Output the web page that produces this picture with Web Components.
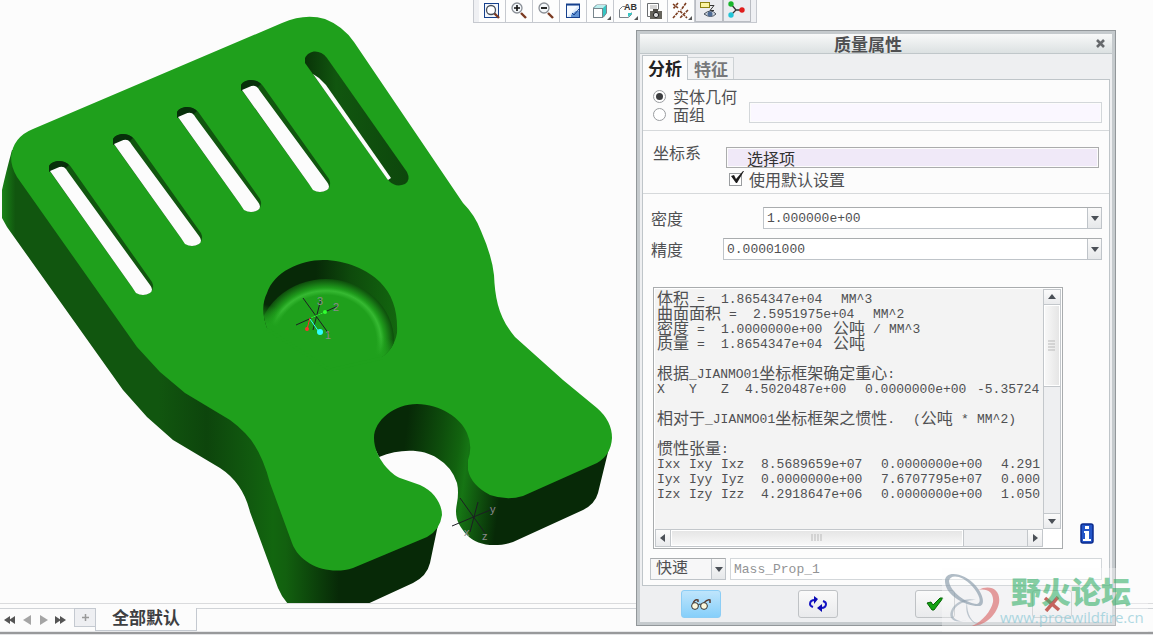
<!DOCTYPE html>
<html lang="zh-CN">
<head>
<meta charset="utf-8">
<title>质量属性</title>
<style>
  html, body { height: 100%; margin: 0; }
  body {
    background: #fcfcfc;
    color: #4f5052;
    font: 16px/18px "Liberation Mono", "Noto Sans CJK SC", monospace;
    overflow: hidden;
  }
</style>
</head>
<body>
<cad-app>
  <model-view></model-view>
  <view-toolbar slot="toolbar"></view-toolbar>
  <tool-dialog slot="dialog" heading="质量属性">
    <mass-form></mass-form>
    <dialog-actions slot="actions"></dialog-actions>
  </tool-dialog>
  <layer-tabs slot="footer" label="全部默认"></layer-tabs>
  <site-mark slot="mark"></site-mark>
</cad-app>

<script>
// small base class: every element renders its template once
class View extends HTMLElement {
  constructor() {
    super();
    this.attachShadow({mode: 'open'});
  }
  connectedCallback() {
    this.shadowRoot.innerHTML = this.render();
  }
}

customElements.define('cad-app', class extends View {
  render() {
    return `
      <style>
        :host { display: flex; flex-direction: column; height: 100%; position: relative; overflow: hidden; }
        main { flex: 1; min-height: 0; overflow: hidden; display: flex; }
        ::slotted([slot=toolbar]) { position: absolute; top: 0; left: 41%; }
        ::slotted([slot=dialog]) { position: absolute; top: 30px; right: 37px; width: min(480px, 100%); box-sizing: border-box; }
        ::slotted([slot=mark]) { position: absolute; right: 5px; bottom: 3px; }
      </style>
      <main><slot></slot></main>
      <slot name="footer"></slot>
      <slot name="toolbar"></slot>
      <slot name="dialog"></slot>
      <slot name="mark"></slot>
    `;
  }
});

// [ax, ay] is the top left end of a slot, [bx, by] its lowest point
const SLOTS = [
  [49, 170, 143, 295],
  [113, 143, 192, 246],
  [177, 116, 251, 212],
  [241, 89, 320, 192],
];

function slotWall([ax, ay, bx, by]) {
  return `M${ax},${ay} v-4 c3,-6 17,-7 22,1 L${bx + 9},${by - 13} q3,7 -2,11 q-7,4 -13,0 L${bx - 11},${by - 8} Z`;
}

function slotCap([ax, ay]) {
  return `M${ax},${ay + 2} v-6 c3,-6 15,-7 20,-1 l-4,4 l-6,-1 Z`;
}

function slotGap([ax, ay, bx, by]) {
  return `M${ax + 1},${ay + 1} l7,-3 q6,-3 9,1 l2,3 L${bx + 7},${by - 10} q4,5 0,8 q-7,4 -14,0 L${bx - 11},${by - 8} Z`;
}

customElements.define('model-view', class extends View {
  render() {
    return `
      <style>
        :host { display: flex; flex: 1; min-width: 0; }
        svg { width: 100%; height: 100%; }
        text { font: 11px "Liberation Sans", sans-serif; fill: #8b8a8c; }
      </style>
      <svg role="img" aria-label="3D">
        <defs>
          <linearGradient id="left" gradientUnits="userSpaceOnUse" x1="0" y1="0" x2="440" y2="0">
            <stop offset="0" stop-color="#1b8a18"/>
            <stop offset=".035" stop-color="#11560f"/>
            <stop offset=".36" stop-color="#11560f"/>
            <stop offset=".47" stop-color="#0d450c"/>
            <stop offset=".57" stop-color="#115a0f"/>
            <stop offset=".62" stop-color="#12660f"/>
            <stop offset=".65" stop-color="#12600f"/>
            <stop offset=".77" stop-color="#072907"/>
            <stop offset="1" stop-color="#072907"/>
          </linearGradient>
          <linearGradient id="right" gradientUnits="userSpaceOnUse" x1="374" y1="440" x2="608" y2="470">
            <stop offset="0" stop-color="#072907"/>
            <stop offset=".13" stop-color="#072907"/>
            <stop offset=".28" stop-color="#0e4d0c"/>
            <stop offset=".36" stop-color="#12630f"/>
            <stop offset=".4" stop-color="#167514"/>
            <stop offset=".56" stop-color="#072907"/>
            <stop offset="1" stop-color="#072907"/>
          </linearGradient>
          <linearGradient id="wall">
            <stop offset="0" stop-color="#072907"/>
            <stop offset=".4" stop-color="#072907"/>
            <stop offset=".65" stop-color="#0e4a0c"/>
            <stop offset="1" stop-color="#13680f"/>
          </linearGradient>
          <linearGradient id="last" x1="0" x2="1">
            <stop offset="0" stop-color="#093408"/>
            <stop offset=".3" stop-color="#11560f"/>
            <stop offset="1" stop-color="#0d470c"/>
          </linearGradient>
          <radialGradient id="floor">
            <stop offset="0" stop-color="#1fa01c"/>
            <stop offset=".74" stop-color="#1fa01c"/>
            <stop offset=".81" stop-color="#36b932"/>
            <stop offset=".86" stop-color="#1f9c1c"/>
            <stop offset="1" stop-color="#0e4d0c"/>
          </radialGradient>
          <linearGradient id="fade" gradientUnits="userSpaceOnUse" x1="340" y1="325" x2="335" y2="343">
            <stop offset="0" stop-color="#1fa01c" stop-opacity="0"/>
            <stop offset="1" stop-color="#1fa01c"/>
          </linearGradient>
          <clipPath id="pocket">
            <path d="M267,328 C262,314 262,303 267,293 C274,272 300,260 323,260 C346,260 368,270 380,282 C393,295 398,312 397,333 C395,344 390,351 382,357 L330,370 Z"/>
          </clipPath>
        </defs>

        <path fill="url(#left)" d="M12,150 Q6,172 2,190 V218 L7,227 L123,390 L147,417 L173,440 L220,468 Q243,483 250,512 L278,588 Q282,598 290,606 L363,606 L413,583 Q427,576 430,563 L439,520 L320,470 L180,330 L40,150 Z"/>
        <path fill="url(#right)" d="M366,430 L379,457 C400,448 424,449 437,458 Q452,467 457,483 Q459,492 457,503 C454,517 458,525 467,535 C476,545 494,548 513,542 L583,510 Q595,504 598,493 L609,448 L560,430 L417,395 H374 Z"/>
        <path fill="#1fa01c" d="M33,129 L282,23 Q305,13 325,19 Q343,26 354,42
          L463,203 Q475,215 481,231 Q492,256 494,275 C495,299 499,318 515,337
          L563,380 L597,408 Q612,421 612,438 Q611,455 597,463
          L523,496 Q507,501 490,495 Q471,485 468,470 L468,460 Q473,446 467,433
          C461,418 440,404 417,404 C395,404 374,420 374,438 C374,458 392,475 400,478
          L420,485 C434,491 442,504 442,515 Q440,530 427,537
          L353,568 C329,576 300,565 292,543
          L270,483 Q261,449 245,433 Q237,425 230,420 L185,393 L160,372 L137,347
          L17,177 Q11,167 11,157 Q13,137 33,129 Z"/>

        <path fill="#11560f" d="${SLOTS.map(slotWall).join(' ')}"/>
        <path fill="#07300a" d="${SLOTS.map(slotCap).join(' ')}"/>
        <path fill="#fcfcfc" d="${SLOTS.map(slotGap).join(' ')}"/>
        <path fill="url(#last)" d="M305,63 V58 C309,50 320,49 327,58 L407,172 Q411,180 405,184 Q396,188 389,181 Z"/>
        <path fill="#fcfcfc" d="M313,74 L319,78 L326,85 L391,178 L388,180 Z"/>

        <g clip-path="url(#pocket)">
          <rect x="260" y="256" width="140" height="115" fill="url(#wall)"/>
          <ellipse cx="326" cy="341" rx="68" ry="62" fill="url(#floor)"/>
          <rect x="260" y="256" width="140" height="115" fill="url(#fade)"/>
        </g>
        <path d="M267,329 L330,370 L382,358" fill="none" stroke="#1fa01c" stroke-width="3"/>

        <g stroke="#1d1d24" fill="none">
          <path d="M303,298 L329,334 M296,325 L338,306 M321,299 L313,330"/>
          <path d="M460,498 L485,533 M452,526 L495,508 M478,502 L470,532"/>
        </g>
        <path stroke="#ff3030" fill="none" d="M310,318 L307,329"/>
        <path stroke="#30ffff" fill="none" d="M310,319 L319,332"/>
        <path stroke="#30ff30" fill="none" d="M311,318 L325,312"/>
        <circle cx="307" cy="329" r="2" fill="#ff3030"/>
        <circle cx="320" cy="332" r="3" fill="#30ffff"/>
        <circle cx="325" cy="312" r="2" fill="#30ff30"/>
        <text x="317" y="305">3</text>
        <text x="333" y="311">2</text>
        <text x="325" y="339">1</text>
        <text x="464" y="536">x</text>
        <text x="490" y="513">y</text>
        <text x="482" y="540">z</text>
      </svg>
    `;
  }
});

const LENS = `<path d="M12,12 l5,5" stroke="#7b3a22" stroke-width="2.4"/><circle cx="8" cy="7" r="5" fill="#f4f7fa" stroke="#8b9097" stroke-width="1.3"/>`;

const TOOLS = [
  ['缩放框', '', `<rect x="2.5" y="2.5" width="14" height="14" fill="#f2f6fc" stroke="#16408c"/><path d="M12,12 l5,5" stroke="#7b3a22" stroke-width="2.4"/><circle cx="9" cy="9" r="4.5" fill="#fff" stroke="#49505a" stroke-width="1.3"/>`],
  ['放大', '', LENS + `<path d="M5,7 h6 M8,4 v6" stroke="#111" stroke-width="1.6"/>`],
  ['缩小', '', LENS + `<path d="M5,7 h6" stroke="#111" stroke-width="1.8"/>`],
  ['重画', '', `<rect x="3.5" y="3.5" width="13" height="13" fill="#dceafa" stroke="#16408c"/><path d="M4,5 h11 l-11,11 Z" fill="#f6faff"/><path d="M3,3.5 h14" stroke="#16408c" stroke-width="2"/><path d="M8,14 l5,-4 h3 v6 h-8 Z" fill="#5f92d4"/><path d="M9,12 l2,2 l5,-6" stroke="#16408c"/>`],
  ['显示样式', 'more', `<path d="M3.5,7 l3,-3 h10 v8 l-3,4 Z" fill="#35c6c4" stroke="#78858c"/><rect x="3.5" y="7.5" width="9" height="9" fill="#fff" stroke="#78858c"/><path d="M4,7 l3,-3 h9 l-3,3 Z" fill="#bdeeee"/>`],
  ['已命名视图', 'more', `<path d="M2.5,8.5 l3,-3 h3 M2.5,8.5 v8 h9 l3,-3 v-2" fill="none" stroke="#7b8288"/><path d="M11,16 v-4 h4 v1 Z" fill="#35c6c4"/><text x="7" y="9">AB</text>`],
  ['视图管理器', '', `<path d="M3.5,2.5 h11 v6 M3.5,2.5 v13 h3" fill="#fff" stroke="#6a6d70"/><path d="M6,5 h7 M6,7 h7" stroke="#aaa"/><rect x="6" y="10" width="12" height="8" fill="#66645c"/><rect x="9" y="8" width="5" height="3" fill="#4d4b45"/><circle cx="12" cy="14" r="2.6" fill="#ddd" stroke="#222"/>`],
  ['基准显示', 'more', `<path d="M2,3 l5,4 M7,2 l-5,6 M15,2 l-5,7 M2,17 l6,-7 M9,10 l7,7 M17,9 l-8,8" stroke="#7a3b1e" stroke-width="1.6" stroke-dasharray="3 1"/>`],
  ['注释显示', 'on', `<rect x="1.5" y="2.5" width="9" height="5" fill="#fbf3a0" stroke="#8c8210"/><path d="M11,5.5 h4 l-4,5 h4" fill="none" stroke="#333"/><path d="M5,14 q7,-6 12,0 q-5,5 -12,0 Z" fill="#cdd4de" stroke="#4a525e"/><circle cx="11" cy="14" r="2.5" fill="#4f6b94"/>`],
  ['旋转中心', 'on', `<path d="M4,4 l5,6 l-5,5 M9,10 h7" stroke="#333" fill="none" stroke-width="1.3"/><circle cx="4" cy="4" r="2.7" fill="#17b52a"/><circle cx="4" cy="15" r="2.7" fill="#20c4d8"/><circle cx="15" cy="10" r="2.7" fill="#e01c1c"/>`],
];

customElements.define('view-toolbar', class extends View {
  render() {
    return `
      <style>
        :host { display: flex; padding: 0 5px; background: #eff0f3; border: solid #c6c9cf; border-width: 0 1px 1px; box-sizing: border-box; }
        button { width: 27px; height: 22px; padding: 0 0 1px 3px; background: #fdfdfd; border: 0; border-right: 1px solid #c6c9cf; position: relative; }
        button:first-child { border-left: 1px solid #c6c9cf; }
        button.on { background: #ebecf0; border: 1px solid #b9bcc2; border-top: 0; width: 28px; }
        button.more::after { content: ""; position: absolute; right: 2px; bottom: 2px; border: 2px solid; border-color: transparent #555 #555 transparent; }
        svg { display: block; width: 20px; height: 20px; fill: none; }
        text { font: bold 9px "Liberation Sans", sans-serif; fill: #333; }
      </style>
      ${TOOLS.map(([name, state, art]) => `<button type="button" class="${state}" aria-label="${name}"><svg viewBox="0 0 20 20">${art}</svg></button>`).join('')}
    `;
  }
});

customElements.define('tool-dialog', class extends View {
  render() {
    return `
      <style>
        :host { display: block; border: 1px solid #92979a; background: #c5cacd; padding: 3px; }
        .body { background: #eeeff1; padding: 0 2px; }
        header {
          display: flex; align-items: center; height: 19px; padding-right: 6px;
          background: linear-gradient(#f8f9f9, #dce1e2); border-bottom: 1px solid #c0c7ca;
        }
        h1 { flex: 1; margin: 0; text-align: center; font: bold 17px/17px "Noto Sans CJK SC", sans-serif; }
        header button { width: 10px; height: 10px; padding: 0; border: 0; background: none; }
        svg { display: block; }
        nav { display: flex; align-items: flex-end; height: 25px; }
        nav button {
          height: 22px; padding: 0 5px 0 6px; border: 1px solid #cdd2d5; border-left: 0; border-bottom: 0; background: #f2f3f4;
          color: #77787a; font: bold 17px/20px "Noto Sans CJK SC", sans-serif;
        }
        nav button[aria-selected=true] {
          height: 25px; margin-bottom: -1px; padding: 0 5px; border: 1px solid #bfc5c9; border-bottom: 0; background: #fcfcfc;
          color: #222; position: relative;
        }
        .panel { border: 1px solid #bfc5c9; background: #fcfcfc; }
      </style>
      <header>
        <h1>${this.getAttribute('heading')}</h1>
        <button type="button" aria-label="关闭"><svg width="10" height="10"><path d="M1,1 l7,7 M8,1 l-7,7" stroke="#66696c" stroke-width="2.6"/></svg></button>
      </header>
      <div class="body">
        <nav role="tablist">
          <button type="button" role="tab" aria-selected="true">分析</button>
          <button type="button" role="tab" aria-selected="false">特征</button>
        </nav>
        <div class="panel"><slot></slot></div>
        <slot name="actions"></slot>
      </div>
    `;
  }
});

// label + drop-down; without a label attribute only the drop-down shows
customElements.define('combo-field', class extends View {
  render() {
    const label = this.getAttribute('label');
    return `
      <style>
        :host { display: flex; align-items: center; }
        label { width: var(--label-width, 72px); flex: none; font-family: "Noto Sans CJK SC", sans-serif; }
        .box { flex: 1; position: relative; display: flex; }
        select {
          appearance: none; width: 100%; height: 22px; margin: 0; padding: 0 16px 0 var(--combo-indent, 3px); border-radius: 0;
          border: 1px solid #bfc4c9; border-top-color: #a9acae; background: var(--combo-bg, #fff); color: inherit;
          font-family: inherit; font-size: var(--combo-size, 13px);
        }
        .arrow {
          position: absolute; top: 1px; right: 1px; bottom: 1px; width: 13px; border-left: 1px solid #bfc4c9;
          background: linear-gradient(#fafafa, #e6e8ea); display: grid; place-items: center; pointer-events: none;
        }
      </style>
      ${label ? `<label for="field">${label}</label>` : ''}
      <span class="box">
        <select id="field" ${label ? '' : 'aria-label="类型"'}><option>${this.getAttribute('value')}</option></select>
        <span class="arrow"><svg width="8" height="6"><path d="M0,1 h8 l-4,5 Z" fill="#4b5057"/></svg></span>
      </span>
    `;
  }
});

const RESULT = `体积 =  1.8654347e+04  MM^3
曲面面积 =  2.5951975e+04  MM^2
密度 =  1.0000000e+00 公吨 / MM^3
质量 =  1.8654347e+04 公吨

根据_JIANMO01坐标框架确定重心:
X   Y   Z  4.5020487e+00  0.0000000e+00 -5.35724

相对于_JIANMO01坐标框架之惯性.  (公吨 * MM^2)

惯性张量:
Ixx Ixy Ixz  8.5689659e+07  0.0000000e+00  4.291
Iyx Iyy Iyz  0.0000000e+00  7.6707795e+07  0.000
Izx Izy Izz  4.2918647e+06  0.0000000e+00  1.050`;

customElements.define('result-box', class extends View {
  render() {
    // tab stops keep the columns on the 8px character grid
    const text = RESULT.replace(/ /g, '\t').replace(/[\u4e00-\u9fff]+/g, '<span>$&</span>');
    return `
      <style>
        :host {
          display: grid; grid-template-columns: minmax(0, 1fr) 18px; grid-template-rows: auto 18px;
          border: 1px solid #a9acae; padding: 1px; background: #fff;
        }
        pre {
          margin: 0; padding: 3px 2px 0; height: 237px; overflow: hidden; background: #f3f3f3;
          font-family: inherit; font-size: 13px; line-height: 15px; tab-size: 8px;
        }
        pre span { font-size: 16px; line-height: 0; vertical-align: -1px; }
        .bar { display: flex; background: #eeeff1; border: 1px solid #c3c7cb; box-sizing: border-box; }
        .v { flex-direction: column; }
        button { padding: 0; border: 0; background: linear-gradient(#fbfbfb, #eaebed); display: grid; place-items: center; flex: 0 0 15px; }
        .v button:first-child { border-bottom: 1px solid #c3c7cb; }
        .v button:last-child { border-top: 1px solid #c3c7cb; }
        .h button:first-child { border-right: 1px solid #c3c7cb; }
        .h button:last-child { border-left: 1px solid #c3c7cb; }
        .track { flex: 1; display: flex; flex-direction: inherit; }
        .thumb { display: grid; place-items: center; border: 1px solid #c3c7cb; box-shadow: inset 0 0 0 1px #fff; }
        .v .thumb { height: 39%; border-width: 0 0 1px; background: linear-gradient(90deg, #f9f9f9, #e4e4e4); }
        .h .thumb { width: 82%; border-width: 0 1px 0 0; background: linear-gradient(#e4e4e4, #f9f9f9); }
      </style>
      <pre tabindex="0">${text}</pre>
      <div class="bar v">
        <button type="button" aria-label="上"><svg width="8" height="6"><path d="M0,5 h8 l-4,-5 Z" fill="#4b5057"/></svg></button>
        <div class="track"><div class="thumb"><svg width="8" height="12"><path d="M0,1 h7 M0,4 h7 M0,7 h7 M0,10 h7" stroke="#b9b9b9"/></svg></div></div>
        <button type="button" aria-label="下"><svg width="8" height="6"><path d="M0,1 h8 l-4,5 Z" fill="#4b5057"/></svg></button>
      </div>
      <div class="bar h">
        <button type="button" aria-label="左"><svg width="6" height="8"><path d="M5,0 v8 l-5,-4 Z" fill="#4b5057"/></svg></button>
        <div class="track"><div class="thumb"><svg width="12" height="8"><path d="M1,0 v7 M4,0 v7 M7,0 v7 M10,0 v7" stroke="#b9b9b9"/></svg></div></div>
        <button type="button" aria-label="右"><svg width="6" height="8"><path d="M1,0 v8 l5,-4 Z" fill="#4b5057"/></svg></button>
      </div>
    `;
  }
});

customElements.define('mass-form', class extends View {
  render() {
    return `
      <style>
        :host { display: block; }
        section { border-bottom: 1px solid #d6d9db; }
        .geometry { display: grid; grid-template-columns: 96px 1fr; padding: 7px 7px 7px 10px; }
        .geometry > input { align-self: end; }
        .csys { display: grid; grid-template-columns: 73px 1fr; padding: 16px 10px 3px; line-height: 16px; }
        label.choice { display: flex; align-items: center; height: 18px; line-height: 16px; font-family: "Noto Sans CJK SC", sans-serif; }
        .check { grid-column: 2; position: relative; }
        label.check { height: 22px; padding-left: 3px; }
        input[type=radio], input[type=checkbox] {
          appearance: none; flex: none; box-sizing: border-box; width: 13px; height: 13px; margin: 0 7px 0 0;
          border: 1px solid #9a9da0; background: #fff; display: grid; place-items: center;
        }
        input[type=radio] { border-radius: 50%; }
        input[type=radio]:checked::before { content: ""; width: 7px; height: 7px; border-radius: 50%; background: #3c3e40; }
        .check svg { position: absolute; left: 4px; top: 3px; pointer-events: none; }
        input[type=text] {
          width: 100%; height: 21px; box-sizing: border-box; margin: 0; padding: 1px; border: 1px solid #d3d7da;
          font: inherit; color: inherit; background: #faf7ff; background-clip: content-box;
        }
        .csys input[type=text] { text-indent: 19px; border-color: #abacad; background-color: #f0e9f8; color: #333; }
        .values { padding: 13px 7px 0 8px; display: grid; gap: 9px; }
        .wide { --label-width: 112px; }
        .output { display: flex; align-items: flex-end; gap: 17px; padding: 27px 15px 0 10px; }
        result-box { flex: 1; min-width: 0; }
        .info { width: 14px; padding: 0 0 5px; border: 0; background: none; }
        .info svg { display: block; }
        .save { display: flex; gap: 4px; padding: 9px 7px 5px; }
        .save combo-field { width: 76px; --combo-bg: #f7f7f8; --combo-indent: 5px; --combo-size: 16px; }
        .save input[type=text] { flex: 1; height: 22px; padding: 0 3px; background: #fff; font-size: 13px; color: #929395; }
      </style>
      <section class="geometry">
        <div>
          <label class="choice"><input type="radio" name="kind" checked>实体几何</label>
          <label class="choice"><input type="radio" name="kind">面组</label>
        </div>
        <input type="text" aria-label="面组" disabled>
      </section>
      <section class="csys">
        <label for="csys">坐标系</label>
        <input type="text" id="csys" value="选择项">
        <label class="choice check"><input type="checkbox" checked>使用默认设置
          <svg width="15" height="14"><path d="M1,5 l3,-1 l2,4 L13,0 h1 L7,12 h-1 Z" fill="#1c1c1c"/></svg>
        </label>
      </section>
      <div class="values">
        <combo-field class="wide" label="密度" value="1.000000e+00"></combo-field>
        <combo-field label="精度" value="0.00001000"></combo-field>
      </div>
      <div class="output">
        <result-box></result-box>
        <button type="button" class="info" aria-label="信息"><svg width="14" height="21"><rect x="1" y="1" width="12" height="19" rx="2" fill="#2456c8" stroke="#0a2a8c" stroke-width="1.5"/><path d="M5,3 h4 v3 h-4 Z M4,8 h5 v8 h2 v2 h-8 v-2 h2 v-6 h-1 Z" fill="#fff"/></svg></button>
      </div>
      <div class="save">
        <combo-field value="快速"></combo-field>
        <input type="text" aria-label="名称" value="Mass_Prop_1">
      </div>
    `;
  }
});

customElements.define('dialog-actions', class extends View {
  render() {
    return `
      <style>
        :host { display: grid; grid-template-columns: repeat(4, 1fr); justify-items: center; padding: 4px 0; }
        button {
          width: 40px; height: 28px; padding: 0; display: grid; place-items: center;
          border: 1px solid #bfc2c5; border-radius: 3px; background: linear-gradient(#fafafa, #e9eaec);
        }
        button.on { border-color: #8ccdf5; background: linear-gradient(#bfe5fc, #86cffa); }
        svg { fill: none; }
      </style>
      <button type="button" class="on" aria-label="预览"><svg width="22" height="12"><path d="M3,6 q1,-5 5,-4 v2 M14,5 q3,-4 6,-3 v3" stroke="#5b3a2c" stroke-width="1.5"/><path d="M8,7 q2,-2 4,0" stroke="#333"/><circle cx="5" cy="8" r="3.4" fill="#fbf7dc" stroke="#333"/><circle cx="14" cy="8" r="3.4" fill="#fbf7dc" stroke="#333"/></svg></button>
      <button type="button" aria-label="重复"><svg width="20" height="16"><path d="M7,4 q-5,0 -5,4 q0,2 3,3 M13,12 q5,0 5,-4 q0,-2 -3,-3" stroke="#1414c4" stroke-width="2"/><path d="M6,0 l4,3 l-4,5 Z M14,8 l-5,4 l5,4 Z" fill="#0a0ab4"/></svg></button>
      <button type="button" aria-label="确定"><svg width="18" height="14"><path d="M1,6 l4,-1 l2,3 l7,-7 h3 L8,13 h-2 Z" fill="#12a312" stroke="#056205"/></svg></button>
      <button type="button" aria-label="取消"><svg width="18" height="16"><path d="M2,2 L16,14 M15,1 L3,15" stroke="#a81208" stroke-width="3.5"/></svg></button>
    `;
  }
});

customElements.define('layer-tabs', class extends View {
  render() {
    return `
      <style>
        :host { display: block; padding-top: 4px; border-top: 1px solid #dadbdd; background: #fcfcfc; }
        .strip { display: flex; height: 23px; }
        .nav, .rest { border-top: 1px solid #d0d3d7; }
        .nav { display: flex; padding-left: 1px; align-items: center; }
        .rest { flex: 1; }
        button { padding: 0; border: 0; background: none; display: grid; place-items: center; }
        .nav button { width: 17px; height: 20px; }
        .nav button:last-child { margin-right: 5px; }
        .add { width: 21px; height: 19px; background: #eeeff2; border: 1px solid #c4c9d0; border-right: 0; }
        .tab {
          height: 23px; padding: 0 16px 4px; border: 1px solid #c4c9d0; border-top: 0; background: #fcfcfc;
          color: #3e3f42; font: bold 17px/18px "Noto Sans CJK SC", sans-serif;
        }
        .edge { height: 1px; background: #e6e7e9; border-bottom: 2px solid #98999b; }
        .end { height: 1px; background: #e3e4e6; }
      </style>
      <div class="strip">
        <div class="nav">
          <button type="button" aria-label="首页"><svg width="11" height="8"><path d="M6,0 v8 l-6,-4 Z M11,0 v8 l-6,-4 Z" fill="#555"/></svg></button>
          <button type="button" aria-label="上一页"><svg width="8" height="10"><path d="M8,0 v10 l-8,-5 Z" fill="#a5a5a5"/></svg></button>
          <button type="button" aria-label="下一页"><svg width="8" height="10"><path d="M0,0 v10 l8,-5 Z" fill="#a5a5a5"/></svg></button>
          <button type="button" aria-label="末页"><svg width="11" height="8"><path d="M0,0 v8 l6,-4 Z M5,0 v8 l6,-4 Z" fill="#555"/></svg></button>
        </div>
        <button type="button" class="add" aria-label="新建"><svg width="7" height="7"><path d="M0,3.5 h7 M3.5,0 v7" stroke="#999" stroke-width="1.5"/></svg></button>
        <button type="button" class="tab">${this.getAttribute('label')}</button>
        <div class="rest"></div>
      </div>
      <div class="edge"></div>
      <div class="end"></div>
    `;
  }
});

customElements.define('site-mark', class extends View {
  render() {
    return `
      <style>
        :host { display: flex; align-items: center; width: 206px; height: 64px; background: rgba(252, 252, 252, .35); pointer-events: none; }
        svg { flex: none; width: 58px; height: 60px; }
        p { margin: 0; opacity: .6; white-space: nowrap; }
        .name { padding-left: 11px; color: #38b16b; font: 900 30px/34px "Noto Sans CJK SC", sans-serif; }
        .url { color: #7cc3d2; font: 15px/20px "Open Sans", "Noto Sans", sans-serif; }
      </style>
      <svg viewBox="0 0 58 60">
        <path fill="#8598a8" fill-opacity=".65" fill-rule="evenodd" d="M3,12 C2,0 22,2 34,16 C43,27 43,37 36,36 C24,36 4,26 3,12 Z M7,11 C8,22 24,33 35,34 C40,33 38,25 30,16 C20,5 8,4 7,11 Z"/>
        <path fill="#d95f5f" fill-opacity=".6" d="M36,20 C48,14 59,19 57,33 C54,47 41,56 30,56 C41,51 49,41 51,32 C52,23 46,18 36,20 Z"/>
        <path fill="#8598a8" fill-opacity=".5" d="M34,30 C22,30 10,36 11,46 C13,51 20,52 25,50 C13,54 6,49 9,41 C12,32 24,27 34,30 Z M25,32 C25,44 29,53 39,55 C29,54 22,44 25,32 Z"/>
      </svg>
      <div>
        <p class="name">野火论坛</p>
        <p class="url">www.proewildfire.cn</p>
      </div>
    `;
  }
});
</script>
</body>
</html>
